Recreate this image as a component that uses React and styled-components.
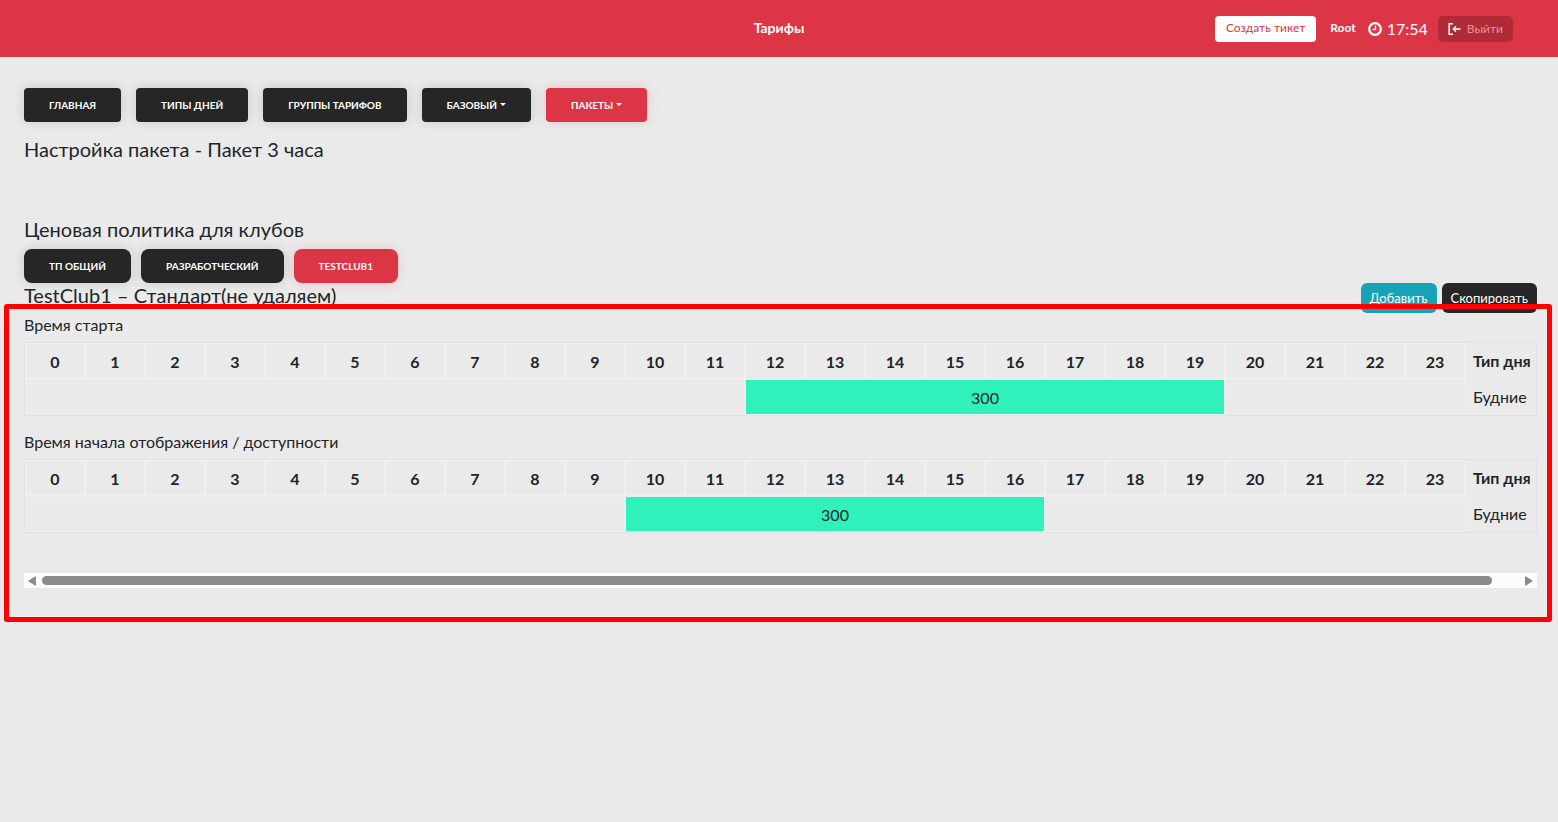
import styled, { createGlobalStyle } from 'styled-components';

const GlobalStyle = createGlobalStyle`
    * {
        box-sizing: border-box;
    }

    body {
        margin: 0;
        background-color: #eaeaea;
        color: #212529;
        font-family: Lato, 'Liberation Sans', sans-serif;
        font-size: 16px;
        line-height: 24px;
    }

    button {
        font-family: inherit;
        cursor: pointer;
    }
`;

const Header = styled.header`
    display: grid;
    grid-template-columns: 1fr auto 1fr;
    align-items: center;
    height: 57px;
    padding: 0 45px;
    background-color: #dc3545;
    color: white;
`;

const PageName = styled.h1`
    grid-column: 2;
    margin: 0;
    padding-bottom: 2px;
    font-size: 14px;
    font-weight: bold;
`;

const Account = styled.div`
    display: flex;
    justify-content: flex-end;
    align-items: center;
`;

const TicketButton = styled.button`
    height: 26px;
    padding: 0 11px 2px;
    border: none;
    border-radius: 4px;
    background-color: white;
    color: #dc3545;
    font-size: 12px;
`;

const User = styled.span`
    margin: 0 12px 0 14px;
    padding-bottom: 2px;
    font-size: 12px;
    font-weight: bold;
`;

const Clock = styled.span`
    display: flex;
    align-items: center;
    gap: 5px;
    margin-right: 10px;
`;

const LogoutButton = styled.button`
    display: flex;
    align-items: center;
    gap: 6px;
    height: 26px;
    padding: 0 10px;
    border: none;
    border-radius: 5px;
    background-color: #b02a37;
    color: #e893a0;
    font-size: 12px;
`;

const Main = styled.main`
    padding: 31px 21px 34px 24px;
`;

const Nav = styled.nav`
    display: flex;
    gap: ${(props) => props.$gap};
`;

const NavButton = styled.button`
    display: flex;
    align-items: center;
    gap: 3px;
    height: 34px;
    padding: 0 25px 1px;
    border: none;
    border-radius: ${(props) => props.$radius};
    background-color: ${(props) => (props.$active ? '#dc3545' : '#262626')};
    box-shadow: 0 0 12px ${(props) => (props.$active ? 'rgba(220, 53, 69, 0.2)' : 'rgba(0, 0, 0, 0.15)')};
    color: white;
    font-size: 10px;
    font-weight: bold;
    text-transform: uppercase;
    white-space: nowrap;
`;

const Caret = styled.span`
    border-top: 3px solid white;
    border-left: 3px solid transparent;
    border-right: 3px solid transparent;
`;

const H2 = styled.h2`
    margin: ${(props) => props.$margin || '0'};
    font-size: 20px;
    font-weight: normal;
    line-height: 24px;
`;

const TitleRow = styled.div`
    display: flex;
    justify-content: space-between;
    height: 30px;
`;

const Actions = styled.div`
    display: flex;
    gap: 5px;
`;

const ActionButton = styled.button`
    height: 30px;
    padding: 0 9px;
    border: none;
    border-radius: 6px;
    background-color: ${(props) => props.$color};
    color: white;
    font-size: 13px;
`;

const Schedule = styled.section`
    position: relative;
`;

const Highlight = styled.div`
    position: absolute;
    top: -9px;
    right: -15px;
    bottom: -34px;
    left: -20px;
    border: 5px solid #ff0000;
    border-radius: 3px;
    pointer-events: none;
`;

const Table = styled.table`
    width: 100%;
    margin-bottom: 14px;
    border: 1px solid #dee2e6;
    border-spacing: 0;
    table-layout: fixed;
`;

const Caption = styled.caption`
    padding-bottom: 5px;
    text-align: left;
`;

const Hour = styled.th`
    height: 36px;
    padding: 2px 0 0;
    border: 1px solid #f0f0f0;
`;

const DayHead = styled.th`
    width: 71px;
    padding: 0 0 0 8px;
    text-align: left;
    white-space: nowrap;
`;

const Slot = styled.td`
    height: 36px;
    padding: 2px 0 0;
    border: 1px solid #eeeeee;
    background-color: ${(props) => (props.$filled ? '#30f0bb' : 'transparent')};
    background-clip: padding-box;
    text-align: center;
`;

const Day = styled.td`
    padding: 0 0 0 8px;
`;

const ScrollBar = styled.div`
    display: flex;
    align-items: center;
    height: 15px;
    margin-top: 40px;
    padding: 0 4px;
    background-color: #fcfcfc;
`;

const ScrollArrow = styled.button`
    display: flex;
    padding: 0;
    border: none;
    background: none;
`;

const ScrollTrack = styled.div`
    flex: 1;
    padding: 0 33px 0 6px;
`;

const ScrollThumb = styled.div`
    height: 9px;
    border-radius: 5px;
    background-color: #8b8b8b;
`;

const hours = Array.from({ length: 24 }, (_, i) => i);

const menu = [
    { name: 'Главная' },
    { name: 'Типы дней' },
    { name: 'Группы тарифов' },
    { name: 'Базовый', dropdown: true },
    { name: 'Пакеты', dropdown: true, active: true },
];

const clubs = [{ name: 'ТП общий' }, { name: 'Разработческий' }, { name: 'TestClub1', active: true }];

const ClockIcon = () => (
    <svg width="14" height="14" viewBox="0 0 14 14" fill="none" stroke="white" aria-hidden="true">
        <circle cx="7" cy="7" r="5.8" strokeWidth="2.2" />
        <path d="M7.5 3.5v4H4.5" strokeWidth="1.4" />
    </svg>
);

const LogoutIcon = () => (
    <svg width="13" height="12" viewBox="0 0 13 12" fill="none" stroke="white" aria-hidden="true">
        <path d="M5 .8H1.2v10.4H5" strokeWidth="1.5" />
        <path d="M12.5 6H5.5M8 3.2 5.2 6 8 8.8" strokeWidth="1.3" />
    </svg>
);

const Hours = ({ title, from, to, price, day }) => (
    <Table>
        <Caption>{title}</Caption>
        <thead>
            <tr>
                {hours.map((v) => (
                    <Hour key={v} scope="col">
                        {v}
                    </Hour>
                ))}
                <DayHead scope="col">Тип дня</DayHead>
            </tr>
        </thead>
        <tbody>
            <tr>
                <Slot colSpan={from} />
                <Slot colSpan={to - from} $filled>
                    {price}
                </Slot>
                <Slot colSpan={24 - to} />
                <Day>{day}</Day>
            </tr>
        </tbody>
    </Table>
);

const App = () => {
    return (
        <>
            <GlobalStyle />
            <Header>
                <PageName>Тарифы</PageName>
                <Account>
                    <TicketButton>Создать тикет</TicketButton>
                    <User>Root</User>
                    <Clock>
                        <ClockIcon />
                        17:54
                    </Clock>
                    <LogoutButton>
                        <LogoutIcon />
                        Выйти
                    </LogoutButton>
                </Account>
            </Header>
            <Main>
                <Nav $gap="15px">
                    {menu.map((v) => (
                        <NavButton key={v.name} $active={v.active} $radius="4px">
                            {v.name}
                            {v.dropdown && <Caret />}
                        </NavButton>
                    ))}
                </Nav>
                <H2 $margin="15px 0 56px">Настройка пакета - Пакет 3 часа</H2>
                <H2 $margin="0 0 8px">Ценовая политика для клубов</H2>
                <Nav $gap="10px">
                    {clubs.map((v) => (
                        <NavButton key={v.name} $active={v.active} $radius="8px">
                            {v.name}
                        </NavButton>
                    ))}
                </Nav>
                <TitleRow>
                    <H2>TestClub1 – Стандарт(не удаляем)</H2>
                    <Actions>
                        <ActionButton $color="#17a2b8">Добавить</ActionButton>
                        <ActionButton $color="#262626">Скопировать</ActionButton>
                    </Actions>
                </TitleRow>
                <Schedule>
                    <Hours title="Время старта" from={12} to={20} price={300} day="Будние" />
                    <Hours title="Время начала отображения / доступности" from={10} to={17} price={300} day="Будние" />
                    <ScrollBar>
                        <ScrollArrow aria-label="Прокрутить влево">
                            <svg width="8" height="10" viewBox="0 0 8 10" fill="#8b8b8b">
                                <path d="M7 .5 1 4.2Q0 5 1 5.8L7 9.5Q8 9.8 8 9V1Q8 .2 7 .5Z" />
                            </svg>
                        </ScrollArrow>
                        <ScrollTrack>
                            <ScrollThumb />
                        </ScrollTrack>
                        <ScrollArrow aria-label="Прокрутить вправо">
                            <svg width="8" height="10" viewBox="0 0 8 10" fill="#8b8b8b">
                                <path d="M1 .5 7 4.2Q8 5 7 5.8L1 9.5Q0 9.8 0 9V1Q0 .2 1 .5Z" />
                            </svg>
                        </ScrollArrow>
                    </ScrollBar>
                    <Highlight />
                </Schedule>
            </Main>
        </>
    );
};

export default App;
